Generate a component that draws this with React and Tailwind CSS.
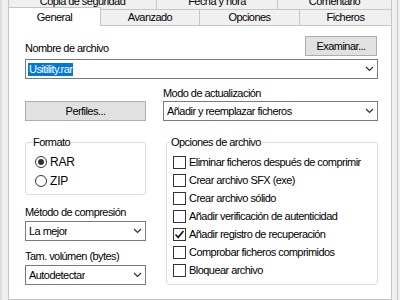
import React from "react";

function Chevron() {
  return (
    <svg width="9" height="6" viewBox="0 0 9 6" className="shrink-0 mr-[3px]">
      <path d="M1 1 L4.5 4.5 L8 1" fill="none" stroke="#333" strokeWidth="1.2" />
    </svg>
  );
}

function Combo({ children, className = "" }) {
  return (
    <div className={"h-[20px] bg-white border border-[#7a7a7a] flex items-center justify-between " + className}>
      <div className="pl-[3px] leading-[13px] truncate">{children}</div>
      <Chevron />
    </div>
  );
}

function Button({ children, className = "" }) {
  return (
    <div className={"h-[20px] bg-[#e1e1e1] border border-[#adadad] flex items-center justify-center leading-[13px] " + className}>
      {children}
    </div>
  );
}

function Checkbox({ checked, label }) {
  return (
    <div className="h-[18px] flex items-center gap-[3px]">
      <div className="w-[13px] h-[13px] border border-[#333] bg-white flex items-center justify-center shrink-0">
        {checked && (
          <svg width="11" height="11" viewBox="0 0 11 11">
            <path d="M1.5 5.5 L4.2 8.3 L9.5 2" fill="none" stroke="#222" strokeWidth="1.8" />
          </svg>
        )}
      </div>
      <span className="leading-[13px] whitespace-nowrap">{label}</span>
    </div>
  );
}

function Radio({ checked, label }) {
  return (
    <div className="h-[14px] flex items-center gap-[3px]">
      <div className="w-[12px] h-[12px] rounded-full border border-[#333] bg-white flex items-center justify-center shrink-0">
        {checked && <div className="w-[6px] h-[6px] rounded-full bg-[#333]" />}
      </div>
      <span className="leading-[13px] text-[12px] tracking-[-0.2px]">{label}</span>
    </div>
  );
}

export default function App() {
  return (
    <div
      className="w-[400px] h-[300px] overflow-hidden bg-[#f0f0f0] flex text-black text-[11px] tracking-[-0.55px]"
      style={{ fontFamily: '"Liberation Sans", Arial, sans-serif' }}
    >
      <div className="w-[2px] bg-[#dddddd] shrink-0" />
      <div className="w-[6px] shrink-0" />
      <div className="w-[384px] shrink-0 flex flex-col">
        {/* Tab row 1 */}
        <div className="flex h-[17px] mt-[-8px]">
          <div className="w-[149px] border border-b-0 border-[#c6c6c6] flex items-center justify-center leading-[13px]">Copia de seguridad</div>
          <div className="w-[121px] border-t border-r border-[#c6c6c6] flex items-center justify-center leading-[13px]">Fecha y hora</div>
          <div className="flex-1 border-t border-r border-[#c6c6c6] flex items-center justify-center leading-[13px]">Comentario</div>
        </div>
        {/* Tab row 2 */}
        <div className="flex h-[16px] items-start">
          <div className="relative z-10 w-[93px] h-[19px] mt-[-2px] bg-white border border-b-0 border-[#c6c6c6] flex items-center justify-center leading-[13px]">General</div>
          <div className="w-[99px] h-[16px] border-t border-r border-[#c6c6c6] flex items-center justify-center leading-[13px]">Avanzado</div>
          <div className="w-[100px] h-[16px] border-t border-r border-[#c6c6c6] flex items-center justify-center leading-[13px]">Opciones</div>
          <div className="flex-1 h-[16px] border-t border-r border-[#c6c6c6] flex items-center justify-center leading-[13px]">Ficheros</div>
        </div>
        {/* Panel */}
        <div className="flex-1 bg-white border border-[#c6c6c6] pl-[16px] pr-[13px] pt-[10px]">
          <div className="flex items-end justify-between">
            <span className="leading-[13px] mb-[1px]">Nombre de archivo</span>
            <Button className="w-[72px] mr-[1px]">Examinar...</Button>
          </div>
          <div className="mt-[3px] h-[20px] bg-white border border-[#7a7a7a] flex items-center justify-between">
            <div className="pl-[2px] flex items-center">
              <span className="bg-[#0078d7] text-white px-[1px] leading-[13px]">Usitility.rar</span>
            </div>
            <Chevron />
          </div>

          <div className="mt-[8px] flex items-end gap-[17px]">
            <Button className="w-[121px]">Perfiles...</Button>
            <div className="w-[215px] flex flex-col">
              <span className="leading-[13px]">Modo de actualización</span>
              <Combo className="mt-[1px]">Añadir y reemplazar ficheros</Combo>
            </div>
          </div>

          <div className="mt-[15px] flex items-start gap-[17px]">
            <div className="w-[121px] flex flex-col">
              <fieldset className="border border-[#dcdcdc] rounded-[3px] pl-[9px] pt-[6px] pb-[6px]">
                <legend className="ml-[-3px] px-[1px] leading-[13px]">Formato</legend>
                <div className="flex flex-col gap-[5px]">
                  <Radio checked label="RAR" />
                  <Radio label="ZIP" />
                </div>
              </fieldset>
              <span className="mt-[11px] leading-[13px]">Método de compresión</span>
              <Combo className="mt-[2px]">La mejor</Combo>
              <span className="mt-[9px] leading-[13px]">Tam. volúmen (bytes)</span>
              <Combo className="mt-[2px]">Autodetectar</Combo>
            </div>
            <fieldset className="ml-[3px] w-[212px] border border-[#dcdcdc] rounded-[3px] pl-[6px] pt-[4px] pb-[5px]">
              <legend className="ml-[-3px] px-[1px] leading-[13px]">Opciones de archivo</legend>
              <Checkbox label="Eliminar ficheros después de comprimir" />
              <Checkbox label="Crear archivo SFX (exe)" />
              <Checkbox label="Crear archivo sólido" />
              <Checkbox label="Añadir verificación de autenticidad" />
              <Checkbox checked label="Añadir registro de recuperación" />
              <Checkbox label="Comprobar ficheros comprimidos" />
              <Checkbox label="Bloquear archivo" />
            </fieldset>
          </div>
        </div>
      </div>
      <div className="w-[5px] shrink-0" />
      <div className="w-[1px] bg-[#c8c8c8] shrink-0" />
    </div>
  );
}
